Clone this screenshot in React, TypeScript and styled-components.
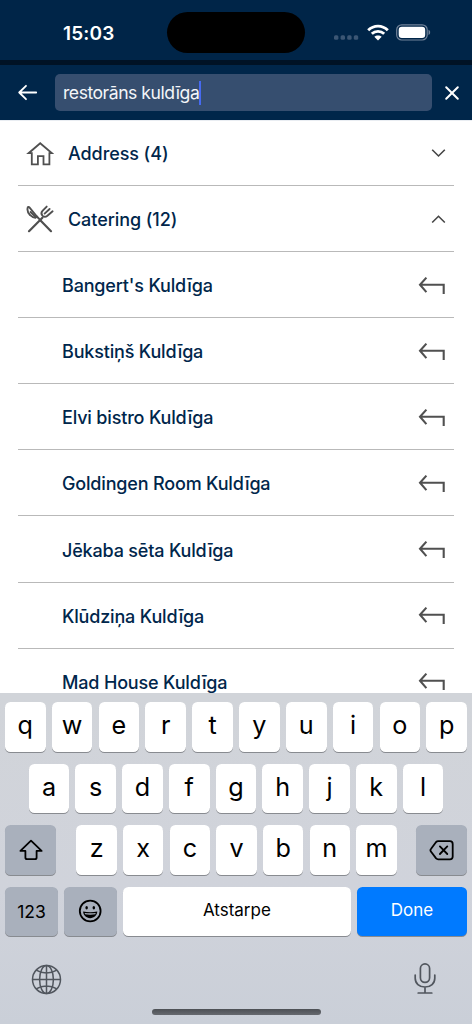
import React from "react";
import styled, { createGlobalStyle } from "styled-components";

const GlobalStyle = createGlobalStyle`
  * { box-sizing: border-box; }
  body { margin: 0; background: #fff; }
`;

const Screen = styled.div`
  width: 472px;
  height: 1024px;
  overflow: hidden;
  display: flex;
  flex-direction: column;
  background: #fff;
  font-family: Inter, "Liberation Sans", sans-serif;
  color: #00264b;
  svg { display: block; flex: none; }
`;

const StatusBar = styled.div`
  flex: none;
  height: 65px;
  background: #002548;
  border-bottom: 5px solid #001225;
  display: flex;
  align-items: center;
  padding: 5px 41px 0 63px;
`;

const Clock = styled.span`
  width: 104px;
  padding-top: 1px;
  font-size: 19px;
  font-weight: 600;
  color: #fff;
  letter-spacing: 0.15px;
`;

const Island = styled.div`
  width: 138px;
  height: 41px;
  border-radius: 21px;
  background: #000;
`;

const Indicators = styled.div`
  display: flex;
  align-items: center;
  gap: 7.5px;
  margin-left: 29.5px;
  margin-top: -1px;
`;

const Header = styled.div`
  flex: none;
  height: 55px;
  background: #00264a;
  display: flex;
  align-items: center;
  padding-left: 17px;
`;

const SearchField = styled.div`
  width: 377px;
  height: 37px;
  margin: 0 12px 0 16px;
  padding-left: 8px;
  border-radius: 5px;
  background: #364e6f;
  display: flex;
  align-items: center;
  color: #f4f6f9;
  font-size: 17.6px;
  letter-spacing: -0.48px;
  white-space: nowrap;
`;

const Caret = styled.i`
  width: 2px;
  height: 24px;
  background: #466af0;
`;

const List = styled.div`
  flex: none;
  height: 573px;
  overflow: hidden;
  padding: 0 18px;
  border-top: 1px solid #e9edf2;
`;

const Row = styled.div<{ $nested?: boolean }>`
  height: 66.1px;
  display: flex;
  align-items: center;
  padding: ${(p) => (p.$nested ? "2px 8px 0 44px" : "1px 8px 0 8px")};
  border-bottom: 1px solid #b9b9b9;
  font-size: 18px;
  font-weight: 500;
  white-space: nowrap;
  &:first-child { height: 65px; }
`;

const Label = styled.span<{ $inset?: boolean }>`
  flex: 1;
  margin-left: ${(p) => (p.$inset ? "14px" : 0)};
  letter-spacing: ${(p) => (p.$inset ? "-0.08px" : "-0.17px")};
`;

const Keyboard = styled.div`
  flex: 1;
  padding: 9px 5px 0;
  background: linear-gradient(#d1d4d9, #d0d3db 60%, #cacfd8);
  color: #000;
`;

const KeyRow = styled.div<{ $inset?: number }>`
  display: flex;
  gap: 6.2px;
  height: 49.5px;
  margin-bottom: 12px;
  padding: 0 ${(p) => p.$inset ?? 0}px;
`;

const Key = styled.div<{ $tone?: "grey" | "blue"; $width?: number; $size?: number; $lift?: number }>`
  flex: ${(p) => (p.$width ? `0 0 ${p.$width}px` : "1 1 0")};
  min-width: 0;
  display: flex;
  align-items: center;
  justify-content: center;
  padding-bottom: ${(p) => p.$lift ?? 0}px;
  border-radius: 5.5px;
  background: ${(p) => (p.$tone === "grey" ? "#a9b0bc" : p.$tone === "blue" ? "#007aff" : "#fff")};
  color: ${(p) => (p.$tone === "blue" ? "#fff" : "#000")};
  box-shadow: 0 1px 0 #888b90;
  font-size: ${(p) => p.$size ?? 25.2}px;
`;

const Letters = styled.div`
  flex: 1;
  display: flex;
  gap: 6.2px;
  margin: 0 13.2px 0 14.2px;
`;

const Dock = styled.div`
  display: flex;
  justify-content: space-between;
  align-items: center;
  height: 58px;
  padding: 0 31px 0 26px;
  margin-top: 14px;
`;

const HomeIndicator = styled.div`
  width: 169px;
  height: 6px;
  margin: 1px 0 0 146.5px;
  border-radius: 3px;
  background: linear-gradient(#4d5055, #66696f);
`;

const Wifi = () => (
  <svg width="22" height="17" viewBox="0 0 22 17" fill="none" stroke="#fff" strokeWidth="2.9">
    <path d="M1.2 6.2C6.8.7 15.2.7 20.8 6.2" />
    <path d="M4.8 9.8c3.5-3.3 8.9-3.3 12.4 0" />
    <path d="M11 16.4 7.3 12.8c2-1.9 5.4-1.9 7.4 0z" fill="#fff" stroke="none" />
  </svg>
);

const Battery = () => (
  <svg width="35" height="17" viewBox="0 0 35 17" fill="none">
    <rect x=".7" y=".8" width="30.5" height="15.2" rx="5" stroke="#718399" strokeWidth="1.2" />
    <rect x="2.7" y="2.8" width="26.5" height="11.2" rx="3.2" fill="#fff" />
    <path d="M32.5 5.8c2.2.8 2.2 4.4 0 5.2z" fill="#718399" />
  </svg>
);

const DotsIcon = styled.svg`
  margin-top: 10px;
`;

const Dots = () => (
  <DotsIcon width="25" height="5" viewBox="0 0 25 5" fill="#3b5674">
    {[0, 6.6, 13.2, 19.8].map((x) => <rect key={x} x={x} y=".3" width="4.4" height="4.4" rx="1.5" />)}
  </DotsIcon>
);

const BackArrow = () => (
  <svg width="22" height="18" viewBox="0 0 22 18" fill="none" stroke="#fff" strokeWidth="1.8" strokeLinecap="round" strokeLinejoin="round">
    <path d="M19.2 8.5H2.2M9 1.8 2.2 8.5 9 15.2" />
  </svg>
);

const Close = () => (
  <svg width="16" height="16" viewBox="0 0 16 16" stroke="#fff" strokeWidth="2" strokeLinecap="round">
    <path d="m2.2 2.2 11.6 11.6M13.8 2.2 2.2 13.8" />
  </svg>
);

const House = () => (
  <svg width="28" height="26" viewBox="0 0 28 26" fill="none" stroke="#505050" strokeWidth="1.8">
    <path d="M5.8 12.2H2.6L14.2 2.3l11.8 9.9h-2.6v11.2h-5.9v-8.2h-5.6v8.2H5.8z" />
  </svg>
);

const Cutlery = () => (
  <svg width="28" height="28" viewBox="0 0 28 28" fill="none" stroke="#505050" strokeWidth="1.9" strokeLinecap="round" strokeLinejoin="round">
    <path d="M25 26.2 14.8 15.7M3 26.2l13.4-13.5" strokeWidth="2.2" />
    <path d="M1.8 2.2c-.9 3 .2 5.9 2.4 8 1.7 1.7 3.2 2.6 5.2 2.6l1.5-1.3L3.4 2.4c-.5-.6-1.2-.7-1.6-.2z" />
    <path d="m10.9 11.5 3.9 4.2M4.6 7l4.6 4.5" />
    <path d="m20.7 1.6-4 4.1c-1.5 1.6-1.4 3.7-.3 4.9 1.3 1.3 3.5 1.4 5 .1l5.2-4.4M23.6 4l-5 4.6" />
  </svg>
);

const Chevron = ({ up = false }: { up?: boolean }) => (
  <svg width="15" height="9" viewBox="0 0 15 9" fill="none" stroke="#454545" strokeWidth="1.6">
    <path d={up ? "M1.2 7.5 7.5 1.3l6.3 6.2" : "M1.2.8l6.3 6.2L13.8.8"} />
  </svg>
);

const Insert = () => (
  <svg width="28" height="20" viewBox="0 0 28 20" fill="none" stroke="#505050" strokeWidth="2.1">
    <path d="M2 8.8h23.7V18M8.4 1.6 2 8.8l6.4 7.3" />
  </svg>
);

const Shift = () => (
  <svg width="24" height="22" viewBox="0 0 24 22" fill="none" stroke="#000" strokeWidth="1.8" strokeLinejoin="round">
    <path d="M12 1.7 1.4 11.9h5v6.5c0 1.1.5 1.7 1.7 1.7h7.8c1.2 0 1.7-.6 1.7-1.7v-6.5h5z" />
  </svg>
);

const Backspace = () => (
  <svg width="25" height="22" viewBox="0 -1 25 22" fill="none" stroke="#000" strokeWidth="1.8" strokeLinecap="round" strokeLinejoin="round">
    <path d="M9.1 1.1h11.8c1.8 0 2.8 1 2.8 2.8v12.6c0 1.8-1 2.8-2.8 2.8H9.1c-.8 0-1.4-.3-2-.9l-5-6.6c-.9-1-.9-2 0-3.1L7.1 2c.6-.6 1.2-.9 2-.9z" />
    <path d="m10.9 6.4 7.4 7.6M18.3 6.4 10.9 14" />
  </svg>
);

const Smiley = () => (
  <svg width="24" height="24" viewBox="0 0 24 24">
    <circle cx="12.2" cy="12" r="10.4" fill="none" stroke="#000" strokeWidth="1.8" />
    <ellipse cx="8.6" cy="8.7" rx="1.25" ry="1.7" />
    <ellipse cx="15.8" cy="8.7" rx="1.25" ry="1.7" />
    <path d="M5.1 12.6c4.4.9 9.8.9 14.2 0-.3 3.9-3.2 6.6-7.1 6.6s-6.8-2.7-7.1-6.6z" />
    <path d="M6.6 13.9c3.6.6 7.6.6 11.2 0l-.6 1.3c-3.1.6-6.9.6-10 0z" fill="#a9b0bc" />
  </svg>
);

const Globe = () => (
  <svg width="31" height="31" viewBox="0 0 31 31" fill="none" stroke="#51565e" strokeWidth="1.5">
    <circle cx="15.5" cy="15.5" r="14" />
    <ellipse cx="15.5" cy="15.5" rx="6.9" ry="14" />
    <path d="M15.5 1.5v28M1.5 15.5h28M5.2 6.2c5.8 3.7 14.8 3.7 20.6 0M5.2 24.8c5.8-3.7 14.8-3.7 20.6 0" />
  </svg>
);

const Mic = () => (
  <svg width="22" height="32" viewBox="0 .6 22 32" fill="none" stroke="#51565e" strokeWidth="1.7" strokeLinecap="round">
    <rect x="6.4" y="1.5" width="9.2" height="18.5" rx="4.6" />
    <path d="M1.2 12.7v3.1c0 5.2 4 8.8 9.8 8.8s9.8-3.6 9.8-8.8v-3.1M11 24.8v5.8M4.2 30.6h13.6" />
  </svg>
);

const places = [
  "Bangert's Kuldīga",
  "Bukstiņš Kuldīga",
  "Elvi bistro Kuldīga",
  "Goldingen Room Kuldīga",
  "Jēkaba sēta Kuldīga",
  "Klūdziņa Kuldīga",
  "Mad House Kuldīga",
];

const letterKeys = (letters: string) =>
  letters.split("").map((l) => <Key key={l} $lift={3}>{l}</Key>);

export default function App() {
  return (
    <Screen>
      <GlobalStyle />
      <StatusBar>
        <Clock>15:03</Clock>
        <Island />
        <Indicators>
          <Dots />
          <Wifi />
          <Battery />
        </Indicators>
      </StatusBar>
      <Header>
        <BackArrow />
        <SearchField>restorāns kuldīga<Caret /></SearchField>
        <Close />
      </Header>
      <List>
        <Row><House /><Label $inset>Address (4)</Label><Chevron /></Row>
        <Row><Cutlery /><Label $inset>Catering (12)</Label><Chevron up /></Row>
        {places.map((name) => (
          <Row key={name} $nested><Label>{name}</Label><Insert /></Row>
        ))}
      </List>
      <Keyboard>
        <KeyRow>{letterKeys("qwertyuiop")}</KeyRow>
        <KeyRow $inset={23.7}>{letterKeys("asdfghjkl")}</KeyRow>
        <KeyRow>
          <Key $tone="grey" $width={51}><Shift /></Key>
          <Letters>{letterKeys("zxcvbnm")}</Letters>
          <Key $tone="grey" $width={51}><Backspace /></Key>
        </KeyRow>
        <KeyRow>
          <Key $tone="grey" $width={53} $size={17.5}>123</Key>
          <Key $tone="grey" $width={52.6}><Smiley /></Key>
          <Key $size={17} $lift={3}>Atstarpe</Key>
          <Key $tone="blue" $width={110} $size={17} $lift={3}>Done</Key>
        </KeyRow>
        <Dock><Globe /><Mic /></Dock>
        <HomeIndicator />
      </Keyboard>
    </Screen>
  );
}
